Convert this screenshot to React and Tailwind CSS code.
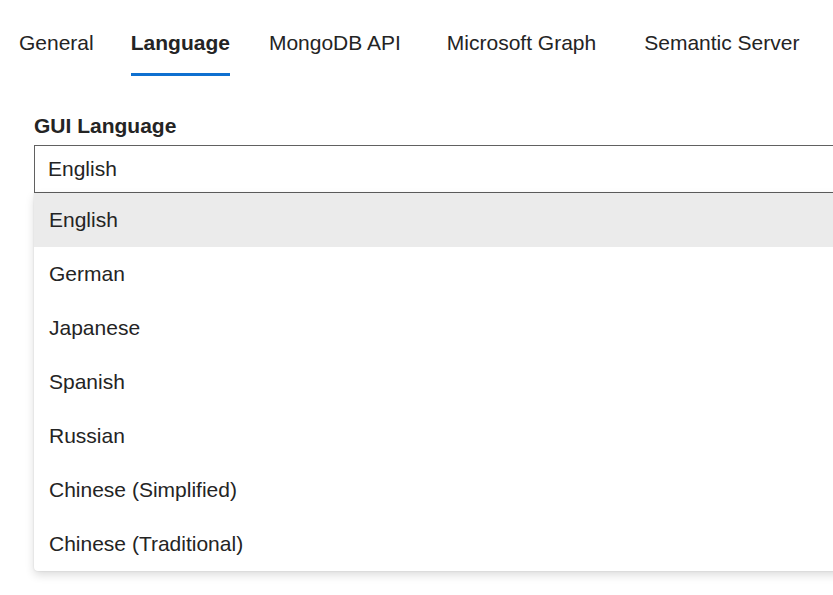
import React from 'react';

const tabs = [
  { label: 'General', ml: 'ml-[19px]' },
  { label: 'Language', ml: 'ml-[37px]', active: true },
  { label: 'MongoDB API', ml: 'ml-[39px]' },
  { label: 'Microsoft Graph', ml: 'ml-[46px]' },
  { label: 'Semantic Server', ml: 'ml-[48px]' },
];

const languages = [
  'English',
  'German',
  'Japanese',
  'Spanish',
  'Russian',
  'Chinese (Simplified)',
  'Chinese (Traditional)',
];

export default function App() {
  return (
    <div
      className="w-[833px] h-[595px] overflow-hidden bg-white text-[#242424]"
      style={{ fontFamily: '"Liberation Sans", Arial, sans-serif' }}
    >
      {/* Tabs */}
      <div className="flex h-[76px] items-start whitespace-nowrap">
        {tabs.map((t) => (
          <div key={t.label} className={`${t.ml} flex flex-col`}>
            <span
              className={`pt-[30px] text-[21px] leading-[26px] ${t.active ? 'font-bold' : ''}`}
            >
              {t.label}
            </span>
            <span
              className={`mt-[17px] h-[3px] ${t.active ? 'bg-[#0e70d0]' : 'bg-transparent'}`}
            />
          </div>
        ))}
      </div>

      {/* Field (runs past the right edge of the window) */}
      <div className="w-[940px] pl-[34px] pt-[38px]">
        <div className="text-[21px] font-bold leading-[24px]">GUI Language</div>
        <div className="relative mt-[7px]">
          <div className="flex h-[48px] items-center border border-[#616161] pl-[13px] text-[21px]">
            English
          </div>
          <div className="absolute left-0 right-0 top-[48px] rounded-b-[4px] bg-white shadow-[0_4px_10px_rgba(0,0,0,0.14),0_0_2px_rgba(0,0,0,0.12)]">
            {languages.map((l, i) => (
              <div
                key={l}
                className={`flex h-[54px] items-center pl-[15px] text-[21px] ${i === 0 ? 'bg-[#ebebeb]' : ''}`}
              >
                {l}
              </div>
            ))}
          </div>
        </div>
      </div>
    </div>
  );
}
